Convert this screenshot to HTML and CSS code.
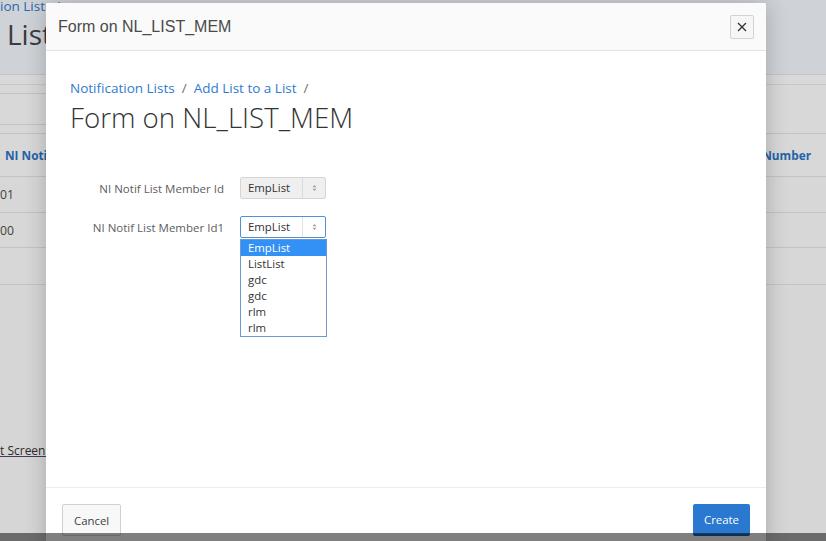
FILE: index.html
```html
<!DOCTYPE html>
<html>
<head>
<meta charset="utf-8">
<title>Form on NL_LIST_MEM</title>
<link rel="stylesheet" href="styles.css">
</head>
<body>
<div class="page">
  <div class="top">
    <div class="top-crumb">ion Lists /</div>
    <div class="top-title">List</div>
  </div>
  <div class="band"></div>
  <div class="toolbar"><div class="toolbar-left"></div></div>
  <div class="thead"><span class="th">NI Noti</span><span class="th">Number</span></div>
  <div class="trow"><span class="td">01</span></div>
  <div class="trow"><span class="td">00</span></div>
  <div class="trow trow-empty"></div>
  <div class="foot-link"><span class="link">t Screen F</span></div>
</div>

<div class="dialog">
  <div class="dlg-head">
    <span class="dlg-title">Form on NL_LIST_MEM</span>
    <button class="close" type="button" aria-label="Close">
      <svg width="10" height="10" viewBox="0 0 10 10"><path d="M1 1 L9 9 M9 1 L1 9" stroke="#333" stroke-width="1.3" fill="none"/></svg>
    </button>
  </div>
  <div class="dlg-body">
    <div class="crumbs">
      <span class="crumb">Notification Lists</span><span class="sep">/</span><span class="crumb">Add List to a List</span><span class="sep">/</span>
    </div>
    <h1 class="heading">Form on NL_LIST_MEM</h1>
    <div class="form">
      <div class="row">
        <label class="lbl">NI Notif List Member Id</label>
        <div class="sel">
          <span class="sel-text">EmpList</span>
          <span class="sel-arrow"><svg width="5" height="8" viewBox="0 0 5 8"><path d="M0.5 3.3 L2.5 1 L4.5 3.3Z M0.5 4.7 L2.5 7 L4.5 4.7Z" fill="#a0a0a0"/></svg></span>
        </div>
      </div>
      <div class="row">
        <label class="lbl">NI Notif List Member Id1</label>
        <div class="sel sel-focus">
          <span class="sel-text">EmpList</span>
          <span class="sel-arrow"><svg width="5" height="8" viewBox="0 0 5 8"><path d="M0.5 3.3 L2.5 1 L4.5 3.3Z M0.5 4.7 L2.5 7 L4.5 4.7Z" fill="#a0a0a0"/></svg></span>
          <div class="listbox">
            <div class="opt opt-hl">EmpList</div>
            <div class="opt">ListList</div>
            <div class="opt">gdc</div>
            <div class="opt">gdc</div>
            <div class="opt">rlm</div>
            <div class="opt">rlm</div>
          </div>
        </div>
      </div>
    </div>
  </div>
  <div class="dlg-foot">
    <button class="btn btn-cancel" type="button">Cancel</button>
    <button class="btn btn-create" type="button">Create</button>
  </div>
</div>

<div class="hbar"></div>
</body>
</html>
```
FILE: styles.css
```css
html, body {
  margin: 0;
  padding: 0;
}
body {
  width: 826px;
  height: 541px;
  overflow: hidden;
  position: relative;
  background: #d6d6d6;
  font-family: "Open Sans", "Noto Sans", sans-serif;
}

/* dimmed background page */
.page {
  width: 826px;
}
.top {
  height: 74px;
  background: #cfd3d8;
  border-bottom: 1px solid #c1c4c8;
  overflow: hidden;
}
.top-crumb {
  font-size: 13.5px;
  line-height: 14px;
  margin-top: -1px;
  color: #2a68ad;
  white-space: nowrap;
}
.top-title {
  font-size: 28px;
  line-height: 32px;
  margin-top: 5px;
  padding-left: 7px;
  color: #3a3c3f;
}
.band {
  height: 9px;
  background: #d9d9d9;
  border-bottom: 1px solid #c6c6c6;
}
.toolbar {
  height: 40px;
  padding-top: 8px;
  background: #d8d8d8;
  border-bottom: 1px solid #c3c3c3;
}
.toolbar-left {
  width: 300px;
  height: 30px;
  border-top: 1px solid #c3c3c3;
  border-bottom: 1px solid #c3c3c3;
}
.thead {
  height: 42px;
  display: flex;
  align-items: center;
  justify-content: space-between;
  padding: 0 15px 0 5px;
  background: #d8d8d8;
  border-bottom: 1px solid #c3c3c3;
}
.th {
  font-size: 11.8px;
  font-weight: 700;
  color: #2462a8;
}
.trow {
  height: 35px;
  display: flex;
  align-items: center;
  background: #d7d7d7;
  border-bottom: 1px solid #c3c3c3;
}
.trow + .trow {
  height: 34px;
}
.trow.trow-empty {
  height: 36px;
}
.td {
  font-size: 12.2px;
  color: #45413a;
}
.foot-link {
  margin-top: 158px;
  font-size: 12px;
  line-height: 16px;
  white-space: nowrap;
}
.link {
  color: #2a2a2a;
  text-decoration: underline;
  text-decoration-color: #4a3a5a;
}

/* dialog */
.dialog {
  position: absolute;
  left: 46px;
  top: 3px;
  width: 720px;
  height: 549px;
  background: #fff;
  display: flex;
  flex-direction: column;
  border-radius: 2px;
  box-shadow: 0 0 22px rgba(0, 0, 0, 0.22);
  z-index: 2;
}
.dlg-head {
  height: 48px;
  flex: none;
  box-sizing: border-box;
  border-bottom: 1px solid #e4e4e4;
  background: #fafafa;
  display: flex;
  align-items: center;
  justify-content: space-between;
  padding: 0 12px;
  border-radius: 2px 2px 0 0;
}
.dlg-title {
  font-family: "Liberation Sans", Arial, sans-serif;
  font-size: 16px;
  color: #4a4a4a;
}
.close {
  width: 24px;
  height: 24px;
  padding: 0;
  margin: 0;
  box-sizing: border-box;
  border: 1px solid #d3d3d3;
  border-radius: 2px;
  background: #f6f6f6;
  display: flex;
  align-items: center;
  justify-content: center;
}
.dlg-body {
  flex: 1;
  padding: 28px 24px 0;
}
.crumbs {
  font-size: 13.5px;
  line-height: 18px;
  white-space: nowrap;
}
.crumb {
  color: #2f7bcf;
}
.sep {
  color: #707070;
  margin: 0 7px;
}
.heading {
  margin: 2px 0 0;
  font-size: 27.7px;
  line-height: 36px;
  font-weight: 300;
  color: #333;
}
.form {
  margin-top: 42px;
  display: flex;
  flex-direction: column;
  gap: 17px;
}
.row {
  display: flex;
  align-items: center;
}
.lbl {
  width: 170px;
  box-sizing: border-box;
  padding-right: 16px;
  text-align: right;
  font-size: 11.5px;
  color: #5e5e5e;
  white-space: nowrap;
}
.sel {
  position: relative;
  width: 86px;
  height: 22px;
  box-sizing: border-box;
  border: 1px solid #d5d5d5;
  border-radius: 2px;
  background: #efefef;
  display: flex;
}
.sel-text {
  flex: 1;
  padding-left: 7px;
  font-size: 11.4px;
  line-height: 20px;
  color: #333;
}
.sel-arrow {
  width: 22px;
  border-left: 1px solid #dadada;
  display: flex;
  align-items: center;
  justify-content: center;
}
.sel-focus {
  background: #fff;
  border-color: #4f92da;
}
.sel-focus .sel-arrow {
  border-left-color: #e2e2e2;
}
.listbox {
  position: absolute;
  left: -1px;
  top: 22px;
  width: 87px;
  box-sizing: border-box;
  border: 1px solid #6d9acd;
  background: #fff;
  z-index: 3;
}
.opt {
  height: 16px;
  line-height: 16px;
  padding-left: 7px;
  font-size: 11.4px;
  color: #333;
}
.opt-hl {
  background: #3390f5;
  color: #fff;
}
.dlg-foot {
  flex: none;
  border-top: 1px solid #ececec;
  padding: 16px;
  display: flex;
  justify-content: space-between;
}
.btn {
  height: 32px;
  box-sizing: border-box;
  padding: 0 11px;
  margin: 0;
  font-family: "Open Sans", "Noto Sans", sans-serif;
  font-size: 11.4px;
  border-radius: 2px;
}
.btn-cancel {
  background: #f8f8f8;
  border: 1px solid #d0d0d0;
  color: #404040;
}
.btn-create {
  background: #2a78cf;
  border: none;
  border-bottom: 2px solid #1c5da6;
  color: #fff;
}
.hbar {
  position: absolute;
  left: 0;
  right: 0;
  bottom: 0;
  height: 8px;
  background: rgba(0, 0, 0, 0.5);
  z-index: 5;
}
```
